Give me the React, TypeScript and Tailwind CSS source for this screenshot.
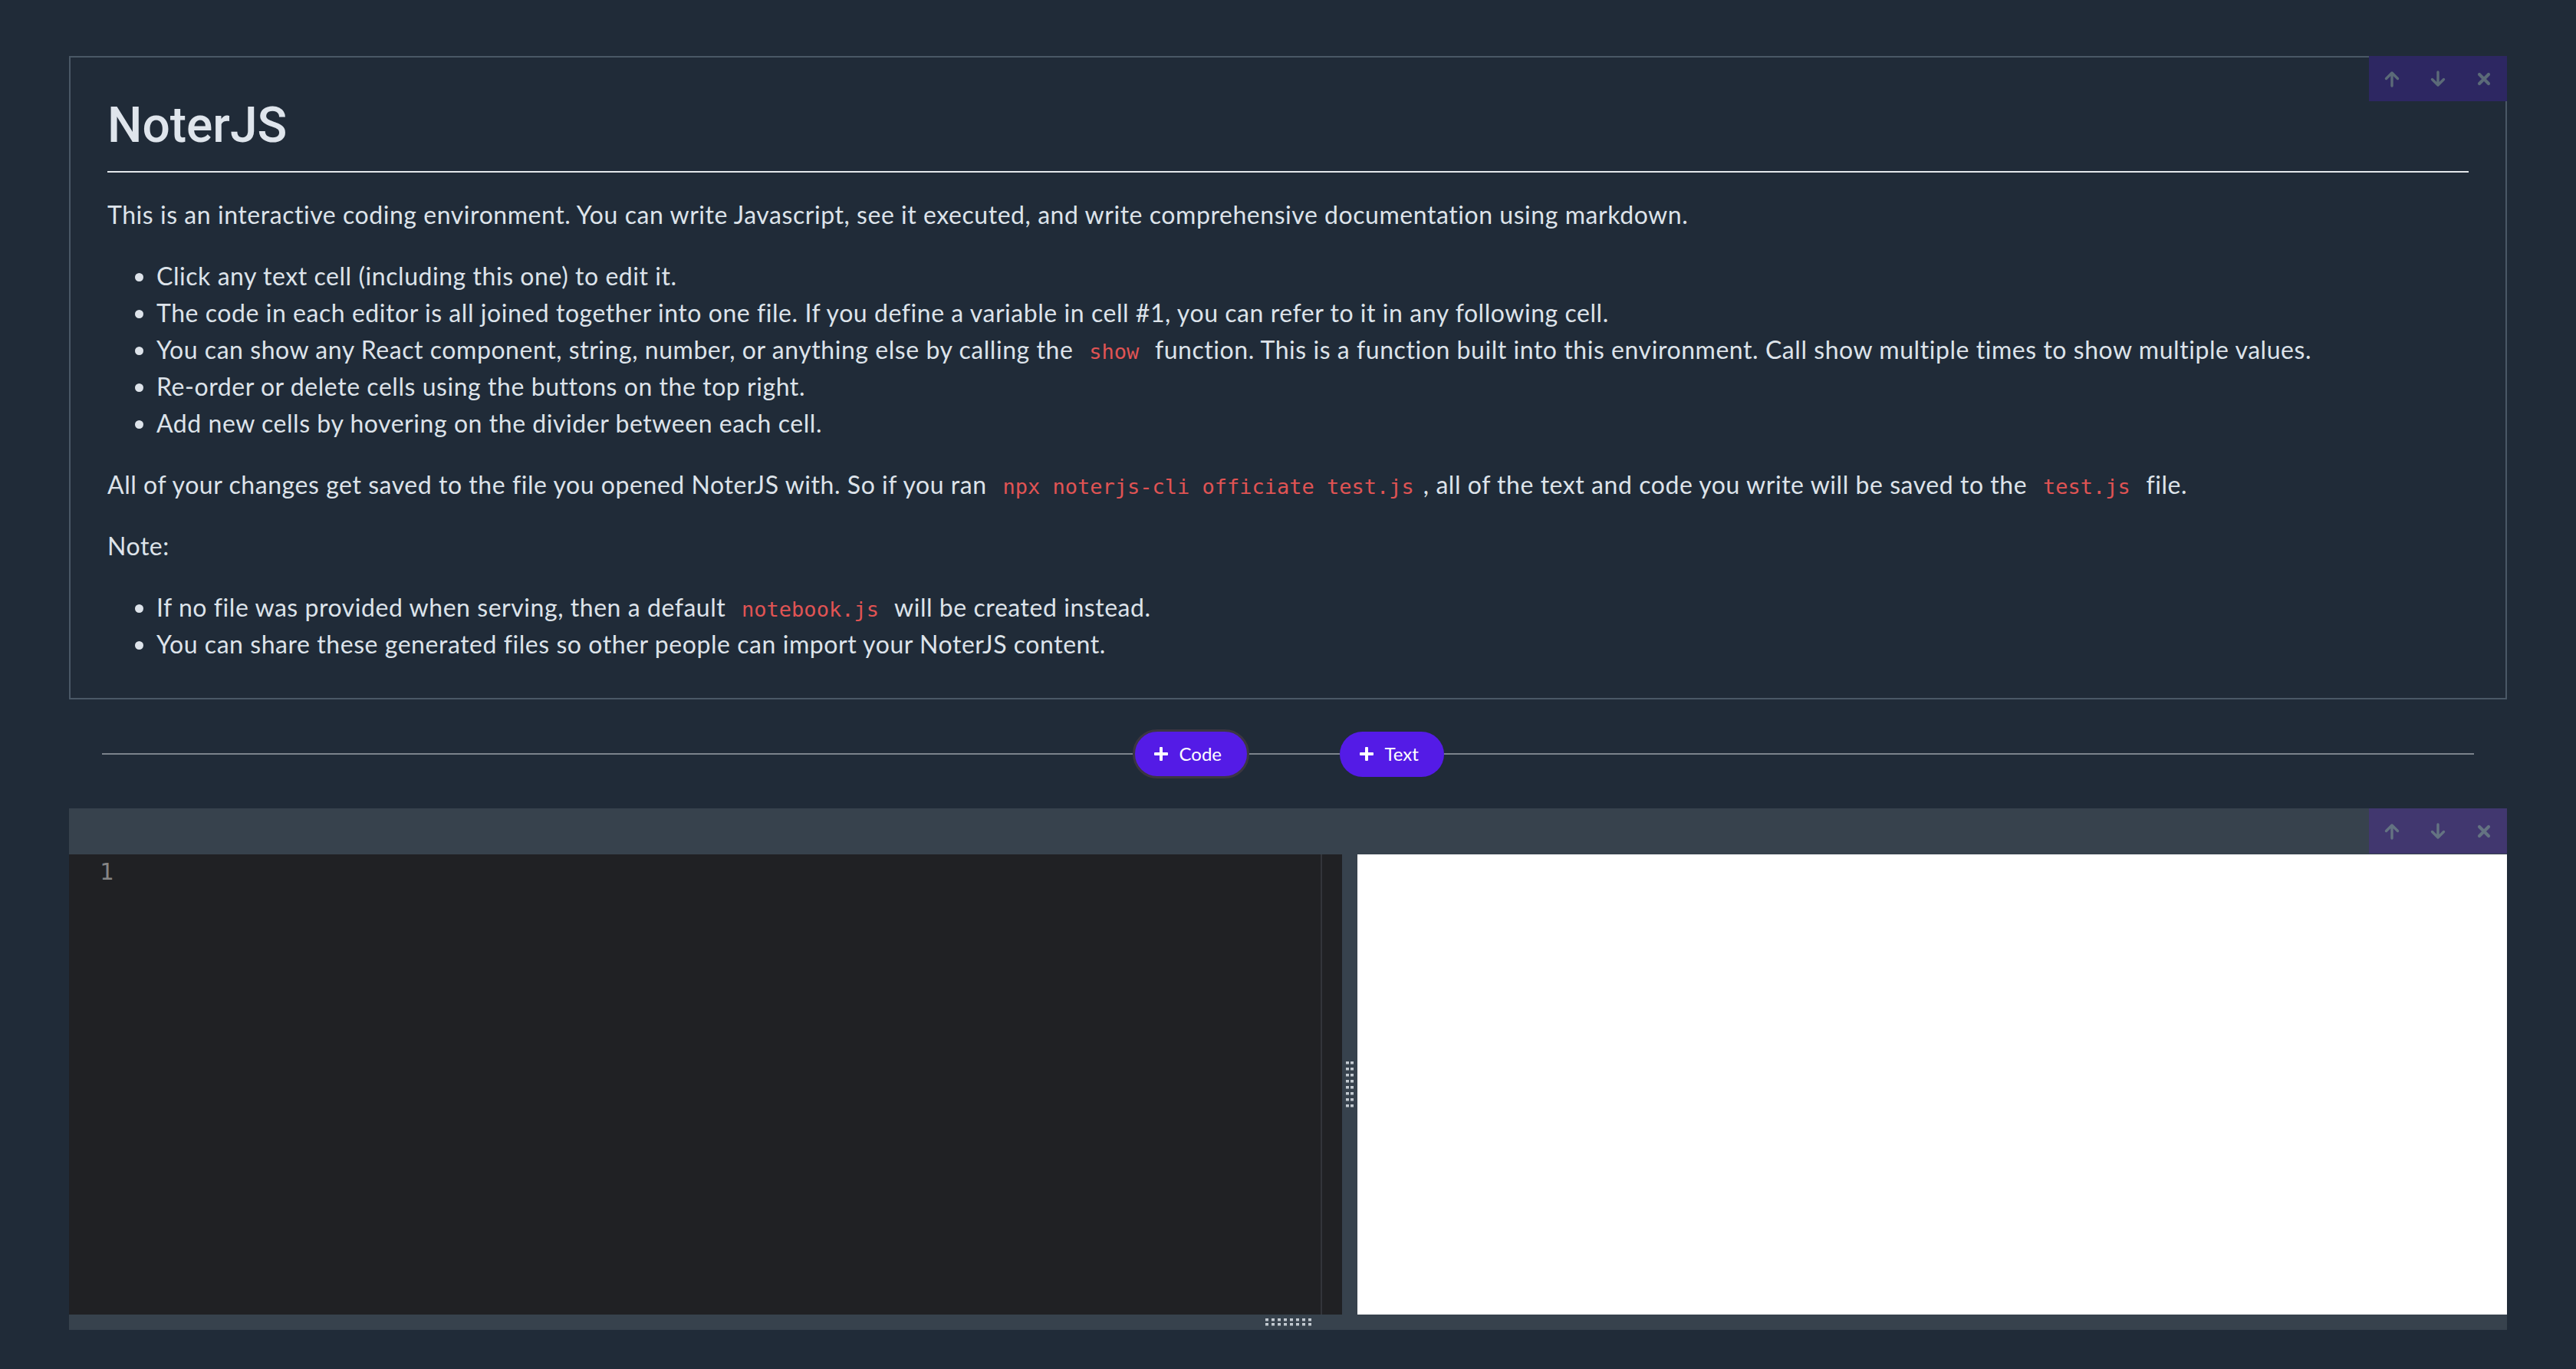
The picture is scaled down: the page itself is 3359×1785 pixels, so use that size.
import React from "react";

const body = { fontFamily: "Lato, 'Noto Sans', sans-serif" };
const mono = { fontFamily: "'DejaVu Sans Mono', 'Liberation Mono', monospace" };

const ArrowUp = () => (
  <svg width="22" height="22" viewBox="0 0 22 22" fill="none" stroke="currentColor" strokeWidth="3.4" strokeLinecap="round" strokeLinejoin="round">
    <path d="M11 20V3M3.5 10.5 11 3l7.5 7.5" />
  </svg>
);

const ArrowDown = () => (
  <svg width="22" height="22" viewBox="0 0 22 22" fill="none" stroke="currentColor" strokeWidth="3.4" strokeLinecap="round" strokeLinejoin="round">
    <path d="M11 2v17M3.5 11.5 11 19l7.5-7.5" />
  </svg>
);

const Times = () => (
  <svg width="18" height="18" viewBox="0 0 18 18" fill="none" stroke="currentColor" strokeWidth="4.2" strokeLinecap="round">
    <path d="M3 3l12 12M15 3 3 15" />
  </svg>
);

const Plus = () => (
  <svg width="20" height="20" viewBox="0 0 20 20" fill="#ffffff">
    <rect x="8" y="1" width="4" height="18" rx="1" />
    <rect x="1" y="8" width="18" height="4" rx="1" />
  </svg>
);

const Toolbar = ({ className }: { className: string }) => (
  <div className={`absolute grid h-[59px] w-[180px] grid-cols-3 place-items-center ${className}`}>
    <ArrowUp />
    <ArrowDown />
    <Times />
  </div>
);

const Code = ({ children }: { children: React.ReactNode }) => (
  <code className="px-[12px] text-[27px] leading-none tracking-normal text-[#e05454]" style={mono}>
    {children}
  </code>
);

// little dotted drag handle, like the resizable box grips
const Grip = ({ cols, rows, dx, dy }: { cols: number; rows: number; dx: number; dy: number }) => (
  <svg width={(cols - 1) * dx + 4} height={(rows - 1) * dy + 4} className="block">
    {Array.from({ length: cols * rows }).map((_, i) => (
      <rect key={i} x={(i % cols) * dx} y={Math.floor(i / cols) * dy} width="4" height="3.5" fill="#c2c9d0" />
    ))}
  </svg>
);

const TextCell = () => (
  <div className="relative h-[839px] border-2 border-[#4a5866] px-[48px] pt-[50px] text-[#dde3ea]" style={body}>
    <Toolbar className="-top-[2px] -right-[2px] bg-[#2d2762] text-[#5b6a78]" />
    <h1
      className="border-b-2 border-[#e4e8ec] pb-[21px] text-[64px] font-medium leading-[77px] text-[#dfe5ec]"
      style={{ fontFamily: "Roboto, 'Liberation Sans', Arial, sans-serif" }}
    >
      NoterJS
    </h1>
    <div className="mt-[31px] text-[32px] leading-[48px] tracking-[0.55px]">
      <p>
        This is an interactive coding environment. You can write Javascript, see it executed, and write comprehensive
        documentation using markdown.
      </p>
      <ul className="mt-[32px] list-disc pl-[64px]">
        <li>Click any text cell (including this one) to edit it.</li>
        <li>
          The code in each editor is all joined together into one file. If you define a variable in cell #1, you can
          refer to it in any following cell.
        </li>
        <li>
          You can show any React component, string, number, or anything else by calling the <Code>show</Code> function.
          This is a function built into this environment. Call show multiple times to show multiple values.
        </li>
        <li>Re-order or delete cells using the buttons on the top right.</li>
        <li>Add new cells by hovering on the divider between each cell.</li>
      </ul>
      <p className="mt-[32px]">
        All of your changes get saved to the file you opened NoterJS with. So if you ran{" "}
        <Code>npx noterjs-cli officiate test.js</Code>, all of the text and code you write will be saved to the{" "}
        <Code>test.js</Code> file.
      </p>
      <p className="mt-[32px]">Note:</p>
      <ul className="mt-[32px] list-disc pl-[64px]">
        <li>
          If no file was provided when serving, then a default <Code>notebook.js</Code> will be created instead.
        </li>
        <li>You can share these generated files so other people can import your NoterJS content.</li>
      </ul>
    </div>
  </div>
);

const ActionBar = () => (
  <div className="flex h-[142px] items-center px-[43px]" style={body}>
    <div className="h-[2px] flex-1 bg-[#7b838c]" />
    <button className="flex h-[64px] w-[152px] items-center gap-[14px] rounded-full border-[3px] border-[#3c3642] bg-[#541be6] pl-[24px] text-[24px] text-white">
      <Plus />
      Code
    </button>
    <div className="h-[2px] w-[118px] bg-[#7b838c]" />
    <button className="flex h-[59px] w-[136px] items-center gap-[14px] rounded-full bg-[#541be6] pl-[25px] text-[24px] text-white">
      <Plus />
      Text
    </button>
    <div className="h-[2px] flex-1 bg-[#7b838c]" />
  </div>
);

const CodeCell = () => (
  <div className="relative">
    <div className="h-[60px] bg-[#37424d]" />
    <Toolbar className="top-0 right-0 bg-[#41376f] text-[#647382]" />
    <div className="flex h-[600px]">
      <div className="flex w-[1660px] bg-[#202124]">
        <div className="flex-1 pl-[40px] pt-[3px] text-[30px] leading-[40px] text-[#858585]" style={mono}>
          1
        </div>
        <div className="w-[28px] border-l-2 border-[#33353a]" />
      </div>
      <div className="flex w-[20px] items-center justify-center bg-[#37424d]">
        <Grip cols={2} rows={8} dx={6} dy={8} />
      </div>
      <div className="flex-1 bg-white" />
    </div>
    <div className="flex h-[20px] items-center justify-center bg-[#37424d]">
      <Grip cols={8} rows={2} dx={8} dy={6} />
    </div>
  </div>
);

export default function App() {
  return (
    <div className="min-h-screen bg-[#202b38] px-[90px] pt-[73px] pb-[51px]">
      <TextCell />
      <ActionBar />
      <CodeCell />
    </div>
  );
}
